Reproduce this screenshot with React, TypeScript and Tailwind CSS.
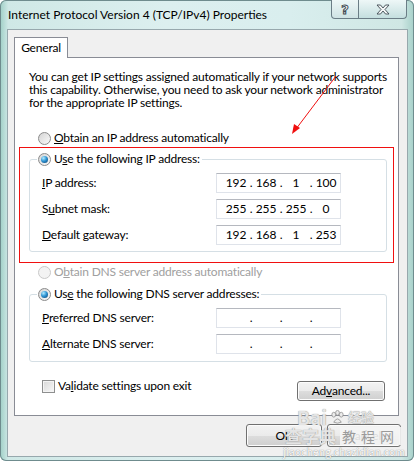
import { Fragment } from 'react';

const font = "font-['Lato',sans-serif]";

const Radio = ({ checked, disabled }: { checked?: boolean; disabled?: boolean }) => (
  <span
    className={
      disabled
        ? 'inline-flex h-[13px] w-[13px] shrink-0 items-center justify-center rounded-full border border-[#c9c9c9] bg-[#f3f3f3]'
        : 'inline-flex h-[13px] w-[13px] shrink-0 items-center justify-center rounded-full border border-[#8b8b8b] bg-[linear-gradient(135deg,#d4d4d4,#fafafa)]'
    }
  >
    {checked && (
      <span className="h-[7px] w-[7px] rounded-full bg-[radial-gradient(circle_at_35%_30%,#b5ecff_0%,#2f95d4_45%,#0c3d6c_100%)]" />
    )}
  </span>
);

const IpBox = ({ parts }: { parts: string[] }) => (
  <div className="flex h-[20px] w-[125px] items-center border border-[#dfe3ea] border-t-[#b5b8bf] bg-white pl-[6px] text-[12px] leading-none text-black">
    {parts.map((p, i) => (
      <Fragment key={i}>
        {i > 0 && <span className="w-[4px] text-center">.</span>}
        <span className="w-[26px] text-center">{p}</span>
      </Fragment>
    ))}
  </div>
);

const Row = ({ label, parts }: { label: React.ReactNode; parts: string[] }) => (
  <div className="flex h-[20px] items-center pl-[12px]">
    <span className="w-[174px] whitespace-nowrap">{label}</span>
    <IpBox parts={parts} />
  </div>
);

const WinButton = ({ children, className }: { children: React.ReactNode; className: string }) => (
  <button
    className={`flex items-center justify-center rounded-[3px] border border-[#707070] bg-[linear-gradient(#f3f3f3_0%,#ebebeb_50%,#dddddd_51%,#cfcfcf_100%)] text-[12px] text-black shadow-[inset_0_0_0_1px_#fcfcfc] ${className}`}
  >
    {children}
  </button>
);

const App = () => {
  const empty = ['', '', '', ''];

  return (
    <div
      className={`relative h-[461px] w-[414px] overflow-hidden rounded-[6px] bg-[linear-gradient(90deg,#9fcfc6_0%,#cfe8e6_2%,#dcefef_40%,#d9eeee_70%,#cfe7e4_97%,#a6d0c9_100%)] shadow-[inset_0_0_0_1px_#6f8c8e] text-[12px] tracking-[-0.2px] text-black ${font}`}
    >
      {/* title bar */}
      <div className="flex h-[29px] items-start">
        <div className="whitespace-nowrap pl-[8px] pt-[7px] text-[12px] leading-[16px] tracking-normal text-black">
          Internet Protocol Version 4 (TCP/IPv4) Properties
        </div>
        <div className="ml-auto mr-[7px] flex h-[19px]">
          <div className="flex w-[28px] items-center justify-center rounded-bl-[4px] border border-t-0 border-[#6b7d86] bg-[linear-gradient(#eef7f7,#cfe3e4)] font-['DejaVu_Sans',sans-serif] text-[13px] font-bold leading-none text-white [-webkit-text-stroke:1px_#3f4b52]">
            ?
          </div>
          <div className="flex w-[48px] items-center justify-center rounded-br-[4px] border border-l-0 border-t-0 border-[#6b7d86] bg-[linear-gradient(#eef7f7,#c4dfdf)]">
            <svg width="14" height="11" viewBox="0 0 14 11">
              <path
                d="M1 1 H4.5 L7 4 L9.5 1 H13 L9 5.5 L13 10 H9.5 L7 7 L4.5 10 H1 L5 5.5 Z"
                fill="#f4f6f6"
                stroke="#3f4b52"
                strokeWidth="0.9"
              />
            </svg>
          </div>
        </div>
      </div>

      {/* client area */}
      <div className="ml-[7px] h-[428px] w-[401px] border border-[#97a8ad] bg-[#f0f0f0] pl-[6px] pt-[7px]">
        {/* tab strip */}
        <div className="relative z-10 -mb-px flex h-[21px] w-[54px] items-center justify-center border border-b-0 border-[#898c95] bg-white">
          General
        </div>

        {/* tab panel */}
        <div className="h-[359px] w-[385px] border border-[#898c95] bg-white">
          <p className="ml-[14px] mt-[12px] whitespace-nowrap leading-[13px]">
            You can get IP settings assigned automatically if your network supports
            <br />
            this capability. Otherwise, you need to ask your network administrator
            <br />
            for the appropriate IP settings.
          </p>

          <div className="ml-[23px] mt-[21px] flex h-[16px] items-center gap-[3px] whitespace-nowrap">
            <Radio />
            <span>
              <u>O</u>btain an IP address automatically
            </span>
          </div>

          {/* group 1 */}
          <div className="ml-[14px] mt-[13px] w-[358px] rounded-[3px] border border-[#d5dfe5] pb-[6px]">
            <div className="-mt-[9px] ml-[7px] flex h-[16px] w-fit items-center gap-[3px] whitespace-nowrap bg-white pl-[1px] pr-[2px]">
              <Radio checked />
              <span>
                U<u>s</u>e the following IP address:
              </span>
            </div>
            <div className="mt-[6px] flex flex-col gap-[6px]">
              <Row
                label={
                  <>
                    <u>I</u>P address:
                  </>
                }
                parts={['192', '168', '1', '100']}
              />
              <Row
                label={
                  <>
                    S<u>u</u>bnet mask:
                  </>
                }
                parts={['255', '255', '255', '0']}
              />
              <Row
                label={
                  <>
                    <u>D</u>efault gateway:
                  </>
                }
                parts={['192', '168', '1', '253']}
              />
            </div>
          </div>

          <div className="ml-[23px] mt-[12px] flex h-[16px] items-center gap-[3px] whitespace-nowrap text-[#a0a0a0]">
            <Radio disabled />
            <span>
              O<u>b</u>tain DNS server address automatically
            </span>
          </div>

          {/* group 2 */}
          <div className="ml-[14px] mt-[14px] w-[358px] rounded-[3px] border border-[#d5dfe5] pb-[7px]">
            <div className="-mt-[9px] ml-[7px] flex h-[16px] w-fit items-center gap-[3px] whitespace-nowrap bg-white pl-[1px] pr-[2px]">
              <Radio checked />
              <span>
                Us<u>e</u> the following DNS server addresses:
              </span>
            </div>
            <div className="mt-[6px] flex flex-col gap-[6px]">
              <Row
                label={
                  <>
                    <u>P</u>referred DNS server:
                  </>
                }
                parts={empty}
              />
              <Row
                label={
                  <>
                    <u>A</u>lternate DNS server:
                  </>
                }
                parts={empty}
              />
            </div>
          </div>

          <div className="mt-[18px] flex items-start pl-[27px] pr-[13px]">
            <span className="h-[13px] w-[13px] shrink-0 border border-[#8e8f8f] bg-[linear-gradient(135deg,#d8d8d8,#f8f8f8)] shadow-[inset_0_0_0_1px_#f4f4f4]" />
            <span className="ml-[3px] -mt-[1px] whitespace-nowrap leading-[14px]">
              Va<u>l</u>idate settings upon exit
            </span>
            <WinButton className="ml-auto mt-[1px] h-[20px] w-[88px]">
              <span>
                Ad<u>v</u>anced...
              </span>
            </WinButton>
          </div>
        </div>

        {/* dialog buttons */}
        <div className="mt-[8px] flex justify-end gap-[5px] pr-[6px]">
          <WinButton className="h-[23px] w-[76px]">OK</WinButton>
          <WinButton className="h-[23px] w-[74px]">Cancel</WinButton>
        </div>
      </div>

      {/* red annotation */}
      <div className="pointer-events-none absolute left-[19px] top-[147px] h-[116px] w-[375px] border border-[#f01010]" />
      <svg className="pointer-events-none absolute left-0 top-0" width="414" height="461">
        <line x1="336" y1="76" x2="296" y2="129" stroke="#f01010" strokeWidth="1" />
        <polygon points="292,134 294,124 300,128" fill="#f01010" />
      </svg>

      {/* watermark */}
      <div className="pointer-events-none absolute left-[272px] top-[407px] w-[142px] font-['Noto_Sans_CJK_SC',sans-serif] tracking-normal text-[#e4e4e4] [text-shadow:0_0_1px_#7c7c7c]">
        <div className="flex items-center gap-[3px] pl-[25px] leading-[20px]">
          <span className="text-[19px] font-bold">Bai</span>
          <svg width="15" height="15" viewBox="0 0 16 16">
            <g fill="#ececec" stroke="#8c8c8c" strokeWidth="0.8">
              <ellipse cx="4" cy="5" rx="2" ry="2.6" />
              <ellipse cx="8" cy="3" rx="2" ry="2.6" />
              <ellipse cx="12" cy="5" rx="2" ry="2.6" />
              <path d="M4 13 Q8 6 12 13 Q8 15 4 13 Z" />
            </g>
          </svg>
          <span className="text-[13px] font-bold">经验</span>
        </div>
        <div className="flex items-center gap-[4px] pl-[13px] leading-[18px]">
          <span className="text-[17px] font-bold">查字典</span>
          <span className="bg-[#f4f4f4]/90 px-[2px] text-[14px] tracking-[5px] text-[#9a9a9a] [text-shadow:none]">教程网</span>
        </div>
        <div className="pl-[11px] text-[10.5px] leading-[14px] text-white [text-shadow:0_0_1px_#5e5e5e]">
          jiaocheng.chazidian.com
        </div>
      </div>
    </div>
  );
};

export default App;
